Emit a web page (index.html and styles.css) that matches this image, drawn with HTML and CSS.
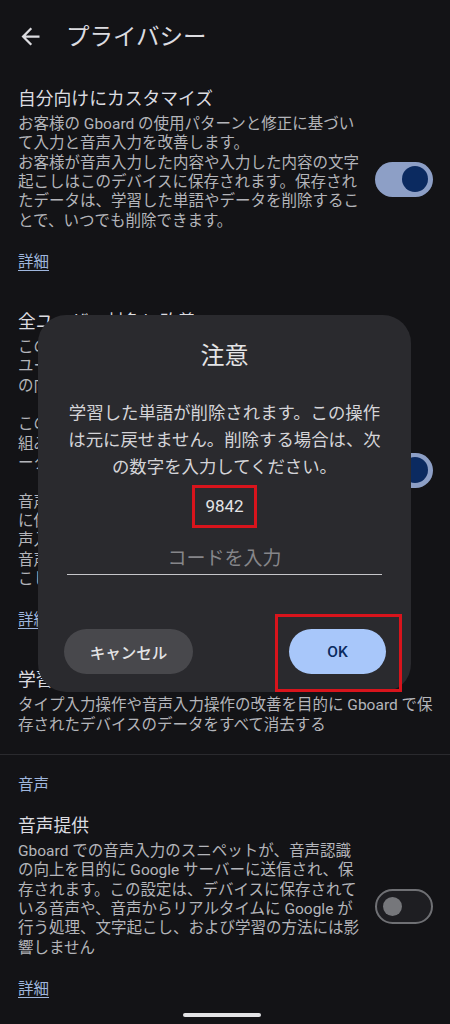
FILE: index.html
```html
<!DOCTYPE html>
<html lang="ja">
<head>
<meta charset="utf-8">
<title>プライバシー</title>
<link rel="stylesheet" href="styles.css">
</head>
<body>
<div class="screen">
  <header class="appbar">
    <svg class="back" viewBox="0 0 24 24" width="27" height="27"><path fill="#dcdce0" d="M20 11H7.830l5.59-5.59L12 4l-8 8 8 8 1.41-1.41L7.83 13H20v-2z"/></svg>
    <h1 class="appbar-title">プライバシー</h1>
  </header>

  <section class="item">
    <div class="item-text">
      <div class="item-title">自分向けにカスタマイズ</div>
      <p class="item-body">お客様の Gboard の使用パターンと修正に基づいて入力と音声入力を改善します。<br>お客様が音声入力した内容や入力した内容の文字起こしはこのデバイスに保存されます。保存されたデータは、学習した単語やデータを削除することで、いつでも削除できます。</p>
      <a class="link">詳細</a>
    </div>
    <span class="switch on"><span class="thumb"></span></span>
  </section>

  <section class="item">
    <div class="item-text">
      <div class="item-title">全ユーザー対象に改善</div>
      <p class="item-body">この設定を有効にすると、入力の改善に役立つ全<br>ユーザー向けのモデルを改良して入力と音声入力<br>の向上に役立てます。<br><br>この処理にはプライバシー保護技術が使われ、仕<br>組みとして、データは匿名で集計され、個々のデ<br>ータが特定されることはありません。<br><br>音声入力の内容は暗号化された状態でデバイス<br>に保存され、個別に送信されることはなく、音<br>声入力の改善のみに使用されます。保存された<br>音声は、学習した単語やデータを削除すると文字<br>こしのデータとともに削除されます。</p>
      <a class="link">詳細</a>
    </div>
    <span class="switch on"><span class="thumb"></span></span>
  </section>

  <section class="item item-wide">
    <div class="item-text">
      <div class="item-title">学習した単語とデータを削除</div>
      <p class="item-body">タイプ入力操作や音声入力操作の改善を目的に Gboard で保存されたデバイスのデータをすべて消去する</p>
    </div>
  </section>

  <div class="category">音声</div>

  <section class="item">
    <div class="item-text">
      <div class="item-title">音声提供</div>
      <p class="item-body">Gboard での音声入力のスニペットが、音声認識の向上を目的に Google サーバーに送信され、保存されます。この設定は、デバイスに保存されている音声や、音声からリアルタイムに Google が行う処理、文字起こし、および学習の方法には影響しません</p>
      <a class="link">詳細</a>
    </div>
    <span class="switch off"><span class="thumb"></span></span>
  </section>

  <div class="home-indicator"></div>

  <div class="dialog" role="dialog">
    <h2 class="dialog-title">注意</h2>
    <p class="dialog-body">学習した単語が削除されます。この操作は元に戻せません。削除する場合は、次の数字を入力してください。</p>
    <div class="code-row"><span class="code">9842</span></div>
    <input class="code-input" type="text" placeholder="コードを入力">
    <div class="dialog-actions">
      <button class="btn btn-cancel">キャンセル</button>
      <div class="ok-mark"><button class="btn btn-ok">OK</button></div>
    </div>
  </div>
</div>
</body>
</html>
```

FILE: styles.css
```css
* { box-sizing: border-box; }

html, body {
  margin: 0;
  padding: 0;
  background: #131316;
}

body {
  font-family: "Roboto", "Noto Sans CJK JP", sans-serif;
  color: #dcdce0;
}

.screen {
  position: relative;
  width: 450px;
  height: 1024px;
  overflow: hidden;
  background: #131316;
}

.appbar {
  height: 68px;
  padding-top: 5px;
  display: flex;
  align-items: center;
}

.back {
  margin-left: 17px;
  flex: none;
}

.appbar-title {
  margin: 0 0 0 22px;
  font-size: 23.5px;
  font-weight: 400;
  line-height: 32px;
  color: #dcdce0;
}

.item {
  display: flex;
  align-items: center;
  gap: 12px;
  padding: 19px 17px 19px 18px;
}

.item-wide {
  padding-right: 12px;
}

.item-text {
  flex: 1;
  min-width: 0;
}

.item-title {
  font-size: 17.8px;
  line-height: 24px;
  color: #dcdce0;
}

.item-body {
  margin: 4px 0 0;
  font-size: 15.5px;
  line-height: 19.33px;
  color: #b4b5ba;
}

.link {
  display: inline-block;
  margin-top: 21px;
  font-size: 15.5px;
  line-height: 20px;
  color: #9fb6dd;
  text-decoration: underline;
  text-underline-offset: 3px;
  text-decoration-thickness: 1px;
}

.switch {
  flex: none;
  width: 58px;
  height: 35px;
  border-radius: 18px;
  display: flex;
  align-items: center;
}

.switch.on {
  background: #8d9fc6;
  justify-content: flex-end;
  padding-right: 5px;
}

.switch.on .thumb {
  width: 26px;
  height: 26px;
  border-radius: 50%;
  background: #0b2a60;
}

.switch.off {
  background: #1e1e22;
  border: 2px solid #6f7074;
  padding-left: 6px;
}

.switch.off .thumb {
  width: 19px;
  height: 19px;
  border-radius: 50%;
  background: #76777b;
}

.category {
  border-top: 1px solid #2a2a2e;
  padding: 20px 18px 0;
  font-size: 15.5px;
  line-height: 20px;
  color: #9fb6dd;
}

.home-indicator {
  position: absolute;
  left: 183px;
  top: 1013px;
  width: 78px;
  height: 4px;
  border-radius: 2px;
  background: #e4e4e6;
}

.dialog {
  position: absolute;
  left: 38px;
  top: 315px;
  width: 373px;
  height: 377px;
  border-radius: 28px;
  background: #2a2a2e;
  padding: 25px 29px 0;
}

.dialog-title {
  margin: 0;
  text-align: center;
  font-size: 24px;
  font-weight: 400;
  line-height: 32px;
  color: #e4e4e6;
}

.dialog-body {
  margin: 28px 0 0;
  text-align: center;
  font-size: 17.4px;
  line-height: 27px;
  color: #d4d4d8;
}

.code-row {
  margin-top: 4px;
  text-align: center;
}

.code {
  display: inline-block;
  border: 3px solid #d8141c;
  padding: 0 10px;
  height: 43px;
  line-height: 37px;
  font-size: 17px;
  color: #e4e4e6;
}

.code-input {
  display: block;
  width: 100%;
  height: 40px;
  margin-top: 7px;
  padding: 7px 0 0;
  border: none;
  border-bottom: 1.5px solid #c6c6ca;
  background: transparent;
  outline: none;
  text-align: center;
  font-family: "Roboto", "Noto Sans CJK JP", sans-serif;
  font-size: 19px;
  color: #e4e4e6;
}

.code-input::placeholder {
  color: #86868a;
}

.dialog-actions {
  display: flex;
  align-items: flex-start;
  justify-content: space-between;
  margin: 39px -20px 0 -3px;
}

.btn {
  border: none;
  height: 45px;
  border-radius: 23px;
  font-family: "Roboto", "Noto Sans CJK JP", sans-serif;
  font-size: 15.5px;
  font-weight: 500;
  padding: 0;
}

.btn-cancel {
  margin-top: 15px;
  width: 129px;
  background: #48484c;
  color: #e4e4e6;
}

.ok-mark {
  border: 3px solid #d8141c;
  padding: 12px 13px 15px 11px;
}

.btn-ok {
  display: block;
  width: 97px;
  background: #a8c7fa;
  color: #0a2a5e;
}
```
